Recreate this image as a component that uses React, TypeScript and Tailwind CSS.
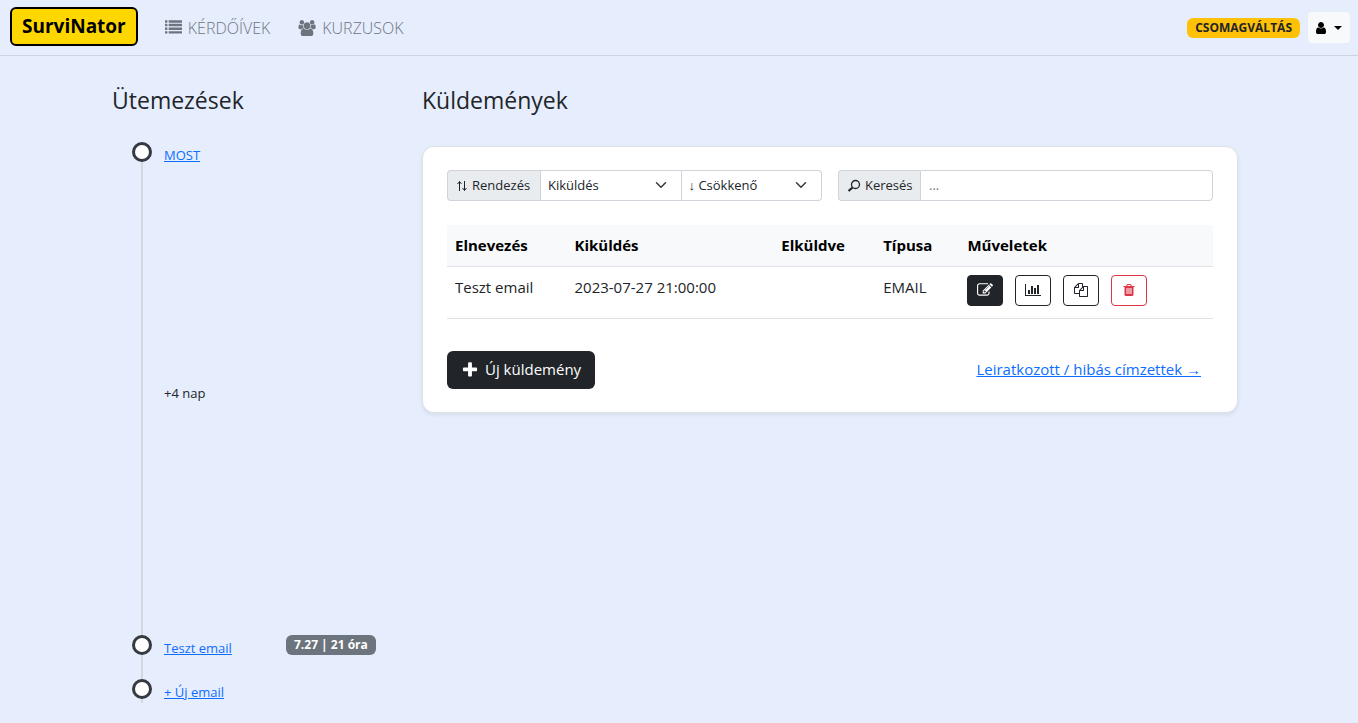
import type { ReactNode } from 'react';

type IconProps = { path: string; box?: string; className?: string };

const icons = {
  list: 'M256 1312v192q0 13-9.5 22.5t-22.5 9.5h-192q-13 0-22.5-9.5t-9.5-22.5v-192q0-13 9.5-22.5t22.5-9.5h192q13 0 22.5 9.5t9.5 22.5zm0-384v192q0 13-9.5 22.5t-22.5 9.5h-192q-13 0-22.5-9.5t-9.5-22.5v-192q0-13 9.5-22.5t22.5-9.5h192q13 0 22.5 9.5t9.5 22.5zm0-384v192q0 13-9.5 22.5t-22.5 9.5h-192q-13 0-22.5-9.5t-9.5-22.5v-192q0-13 9.5-22.5t22.5-9.5h192q13 0 22.5 9.5t9.5 22.5zm1536 768v192q0 13-9.5 22.5t-22.5 9.5h-1344q-13 0-22.5-9.5t-9.5-22.5v-192q0-13 9.5-22.5t22.5-9.5h1344q13 0 22.5 9.5t9.5 22.5zm-1536-1152v192q0 13-9.5 22.5t-22.5 9.5h-192q-13 0-22.5-9.5t-9.5-22.5v-192q0-13 9.5-22.5t22.5-9.5h192q13 0 22.5 9.5t9.5 22.5zm1536 768v192q0 13-9.5 22.5t-22.5 9.5h-1344q-13 0-22.5-9.5t-9.5-22.5v-192q0-13 9.5-22.5t22.5-9.5h1344q13 0 22.5 9.5t9.5 22.5zm0-384v192q0 13-9.5 22.5t-22.5 9.5h-1344q-13 0-22.5-9.5t-9.5-22.5v-192q0-13 9.5-22.5t22.5-9.5h1344q13 0 22.5 9.5t9.5 22.5zm0-384v192q0 13-9.5 22.5t-22.5 9.5h-1344q-13 0-22.5-9.5t-9.5-22.5v-192q0-13 9.5-22.5t22.5-9.5h1344q13 0 22.5 9.5t9.5 22.5z',
  users: 'M529 896q-162 5-265 128h-134q-82 0-138-40.5t-56-118.5q0-353 124-353 6 0 43.5 21t97.5 42.5 119 21.5q67 0 133-23-5 37-5 66 0 159 93 293zm1071 637q0 120-73 189.5t-194 69.5h-874q-121 0-194-69.5t-73-189.5q0-53 3.5-103.5t14-109 26.5-108.5 43-97.5 62-81 85.5-53.5 111.5-20q10 0 43 21.5t73 48 107 48 135 21.5 135-21.5 107-48 73-48 43-21.5q61 0 111.5 20t85.5 53.5 62 81 43 97.5 26.5 108.5 14 109 3.5 103.5zm-1024-1277q0 106-75 181t-181 75-181-75-75-181 75-181 181-75 181 75 75 181zm704 384q0 159-112.5 271.5t-271.5 112.5-271.5-112.5-112.5-271.5 112.5-271.5 271.5-112.5 271.5 112.5 112.5 271.5zm576 225q0 78-56 118.5t-138 40.5h-134q-103-123-265-128 93-134 93-293 0-29-5-66 66 23 133 23 59 0 119-21.5t97.5-42.5 43.5-21q124 0 124 353zm-128-609q0 106-75 181t-181 75-181-75-75-181 75-181 181-75 181 75 75 181z',
  user: 'M1536 1399q0 109-62.5 187t-150.5 78h-854q-88 0-150.5-78t-62.5-187q0-85 8.5-160.5t31.5-152 58.5-131 94-89 134.5-34.5q131 128 313 128t313-128q76 0 134.5 34.5t94 89 58.5 131 31.5 152 8.5 160.5zm-256-887q0 159-112.5 271.5t-271.5 112.5-271.5-112.5-112.5-271.5 112.5-271.5 271.5-112.5 271.5 112.5 112.5 271.5z',
  edit: 'M888 1184l116-116-152-152-116 116v56h96v96h56zm440-720q-16-16-33 1l-350 350q-17 17-1 33t33-1l350-350q17-17 1-33zm80 594v190q0 119-84.5 203.5t-203.5 84.5h-832q-119 0-203.5-84.5t-84.5-203.5v-832q0-119 84.5-203.5t203.5-84.5h832q63 0 117 25 15 7 18 23 3 17-9 29l-49 49q-14 14-32 8-23-6-45-6h-832q-66 0-113 47t-47 113v832q0 66 47 113t113 47h832q66 0 113-47t47-113v-126q0-13 9-22l64-64q15-15 35-7t20 29zm-96-738l288 288-672 672h-288v-288zm444 132l-92 92-288-288 92-92q28-28 68-28t68 28l152 152q28 28 28 68t-28 68z',
  chart: 'M640 896v512h-256v-512h256zm384-512v1024h-256v-1024h256zm1024 1152v128h-2048v-1536h128v1408h1920zm-640-896v768h-256v-768h256zm384-384v1152h-256v-1152h256z',
  copy: 'M1696 384q40 0 68 28t28 68v1216q0 40-28 68t-68 28h-960q-40 0-68-28t-28-68v-288h-544q-40 0-68-28t-28-68v-672q0-40 20-88t48-76l408-408q28-28 76-48t88-20h416q40 0 68 28t28 68v328q68-40 128-40h416zm-544 213l-299 299h299v-299zm-640-384l-299 299h299v-299zm196 647l316-316v-416h-384v416q0 40-28 68t-68 28h-416v640h512v-256q0-40 20-88t48-76zm956 804v-1152h-384v416q0 40-28 68t-68 28h-416v640h896z',
  trash: 'M704 1376v-704q0-14-9-23t-23-9h-64q-14 0-23 9t-9 23v704q0 14 9 23t23 9h64q14 0 23-9t9-23zm256 0v-704q0-14-9-23t-23-9h-64q-14 0-23 9t-9 23v704q0 14 9 23t23 9h64q14 0 23-9t9-23zm256 0v-704q0-14-9-23t-23-9h-64q-14 0-23 9t-9 23v704q0 14 9 23t23 9h64q14 0 23-9t9-23zm-544-992h448l-48-117q-7-9-17-11h-317q-10 2-17 11zm928 32v64q0 14-9 23t-23 9h-96v948q0 83-47 143.5t-113 60.5h-832q-66 0-113-58.5t-47-141.5v-952h-96q-14 0-23-9t-9-23v-64q0-14 9-23t23-9h309l70-167q15-37 54-63t79-26h320q40 0 79 26t54 63l70 167h309q14 0 23 9t9 23z',
  plus: 'M1600 736v192q0 40-28 68t-68 28h-416v416q0 40-28 68t-68 28h-192q-40 0-68-28t-28-68v-416h-416q-40 0-68-28t-28-68v-192q0-40 28-68t68-28h416v-416q0-40 28-68t68-28h192q40 0 68 28t28 68v416h416q40 0 68 28t28 68z',
};

function Icon({ path, box = '0 0 1792 1792', className = 'size-4' }: IconProps) {
  return (
    <svg viewBox={box} className={className} fill="currentColor" aria-hidden="true">
      <path d={path} />
    </svg>
  );
}

function NavLink({ icon, children }: { icon: ReactNode; children: ReactNode }) {
  return (
    <a href="#" className="flex items-center gap-1.5 font-light text-[#6c757d]">
      {icon}
      {children}
    </a>
  );
}

function Header() {
  return (
    <header className="flex h-14 items-center border-b border-[#cdd3e0] pr-2 pl-2.5">
      <a
        href="#"
        className="mb-0.5 flex h-[39px] items-center rounded-md border-2 border-black bg-[#ffd700] px-2.5 text-[19px] font-bold text-black"
      >
        SurviNator
      </a>
      <nav className="ml-[27px] flex grow items-center gap-7 text-[16px]">
        <NavLink icon={<Icon path={icons.list} className="size-[17px]" />}>KÉRDŐÍVEK</NavLink>
        <NavLink icon={<Icon path={icons.users} box="-64 0 1920 1792" className="h-4 w-[18px]" />}>
          KURZUSOK
        </NavLink>
      </nav>
      <div className="flex items-center gap-2">
        <a
          href="#"
          className="flex h-5 items-center rounded-md bg-[#ffc107] px-2 text-[12px] font-bold text-[#212529]"
        >
          CSOMAGVÁLTÁS
        </a>
        <button
          type="button"
          aria-label="Fiók"
          className="flex h-[31px] items-center gap-2 rounded bg-[#f8f9fa] px-2 text-black"
        >
          <Icon path={icons.user} box="256 0 1280 1792" className="h-3.5 w-2.5" />
          <svg viewBox="0 0 8 4" className="h-1 w-2" fill="currentColor" aria-hidden="true">
            <path d="M0 0h8L4 4z" />
          </svg>
        </button>
      </div>
    </header>
  );
}

function Step({
  marker = true,
  className,
  children,
}: {
  marker?: boolean;
  className: string;
  children: ReactNode;
}) {
  return (
    <li className={`flex gap-3 ${className}`}>
      <span className="flex w-5 flex-col items-center">
        {marker && <span className="size-5 rounded-full border-3 border-[#343a40] bg-white" />}
        <span className="w-0.5 grow bg-[#d3d7e0]" />
      </span>
      {children}
    </li>
  );
}

function Timeline() {
  return (
    <section>
      <h2 className="text-[23px] leading-7 font-medium">Ütemezések</h2>
      <ol className="mt-7 ml-5 text-[13px] leading-5">
        <Step className="h-[238px]">
          <a href="#" className="mt-[3px] self-start text-[#0d6efd] underline">
            MOST
          </a>
        </Step>
        <Step marker={false} className="h-[255px]">
          <span className="mt-[3px]">+4 nap</span>
        </Step>
        <Step className="h-11">
          <a href="#" className="mt-[3px] w-[110px] self-start text-[#0d6efd] underline">
            Teszt email
          </a>
          <span className="flex h-5 items-center rounded-md bg-[#6c757d] px-2 text-[12px] font-bold text-white">
            7.27 | 21 óra
          </span>
        </Step>
        <Step className="h-6">
          <a href="#" className="mt-[3px] self-start text-[#0d6efd] underline">
            + Új email
          </a>
        </Step>
      </ol>
    </section>
  );
}

function Select({ id, label, options, className }: { id: string; label: string; options: string[]; className: string }) {
  return (
    <div className={`relative flex-1 border border-[#ced4da] bg-white ${className}`}>
      <select id={id} aria-label={label} className="h-full w-full appearance-none bg-transparent pr-8 pl-[7px] outline-none">
        {options.map((option) => (
          <option key={option}>{option}</option>
        ))}
      </select>
      <svg
        viewBox="0 0 16 16"
        className="pointer-events-none absolute top-2 right-3.5 size-3"
        fill="none"
        stroke="#343a40"
        strokeWidth="2"
        strokeLinecap="round"
        strokeLinejoin="round"
        aria-hidden="true"
      >
        <path d="m2 5 6 6 6-6" />
      </svg>
    </div>
  );
}

function Filters() {
  return (
    <div className="flex gap-4 text-[13px]">
      <div className="flex h-[31px] w-[375px]">
        <label
          htmlFor="sort"
          className="flex w-[93px] items-center gap-1 rounded-l border border-r-0 border-[#ced4da] bg-[#e9ecef] pl-2"
        >
          <svg viewBox="0 0 12 12" className="size-3" fill="none" stroke="currentColor" aria-hidden="true">
            <path d="M3.5 11V1.5M1.5 4l2-2.5 2 2.5M8.500 1v9.500M6.500 8l2 2.500 2-2.500" />
          </svg>
          Rendezés
        </label>
        <Select id="sort" label="Rendezés" options={['Kiküldés', 'Elnevezés']} className="" />
        <Select id="order" label="Sorrend" options={['↓ Csökkenő', '↑ Növekvő']} className="rounded-r border-l-0" />
      </div>
      <div className="flex h-[31px] grow">
        <label
          htmlFor="search"
          className="flex w-[82px] items-center gap-1 rounded-l border border-r-0 border-[#ced4da] bg-[#e9ecef] pl-2"
        >
          <svg viewBox="0 0 14 14" className="size-3.5" fill="none" stroke="currentColor" aria-hidden="true">
            <circle cx="8.500" cy="5.500" r="4" strokeWidth="1.300" />
            <path d="M5.500 8.500 1.500 12" strokeWidth="2.200" />
          </svg>
          Keresés
        </label>
        <input
          id="search"
          type="text"
          placeholder="..."
          className="min-w-0 grow rounded-r border border-[#ced4da] bg-white px-2 outline-none placeholder:text-[#6c757d]"
        />
      </div>
    </div>
  );
}

function Action({ label, className, children }: { label: string; className: string; children: ReactNode }) {
  return (
    <button
      type="button"
      aria-label={label}
      className={`flex h-[31px] w-9 items-center justify-center rounded border ${className}`}
    >
      {children}
    </button>
  );
}

function Mailings() {
  return (
    <section>
      <h2 className="text-[23px] leading-7 font-medium">Küldemények</h2>
      <div className="mt-8 rounded-xl border border-[#dee2e6] bg-white px-6 py-[23px] shadow-[0_2px_4px_rgba(0,0,0,0.075)]">
        <Filters />
        <table className="mt-6 w-full table-fixed text-left text-[15px]">
          <colgroup>
            <col className="w-[15.6%]" />
            <col className="w-[27%]" />
            <col className="w-[13.3%]" />
            <col className="w-[11%]" />
            <col />
          </colgroup>
          <thead>
            <tr className="h-[41px] border-b border-[#dee2e6] bg-[#f8f9fa] text-black">
              <th className="px-2 font-bold">Elnevezés</th>
              <th className="px-2 font-bold">Kiküldés</th>
              <th className="px-2 font-bold">Elküldve</th>
              <th className="px-2 font-bold">Típusa</th>
              <th className="px-2 font-bold">Műveletek</th>
            </tr>
          </thead>
          <tbody>
            <tr className="h-[52px] border-b border-[#dee2e6] align-top leading-6">
              <td className="p-2">Teszt email</td>
              <td className="p-2">2023-07-27 21:00:00</td>
              <td className="p-2" />
              <td className="p-2">EMAIL</td>
              <td className="px-2 pt-2">
                <div className="flex gap-3">
                  <Action label="Szerkesztés" className="border-[#212529] bg-[#212529] text-white">
                    <Icon path={icons.edit} />
                  </Action>
                  <Action label="Statisztika" className="border-[#212529]">
                    <Icon path={icons.chart} box="0 0 2048 1792" className="h-3.5 w-4" />
                  </Action>
                  <Action label="Másolás" className="border-[#212529]">
                    <Icon path={icons.copy} className="size-3.5" />
                  </Action>
                  <Action label="Törlés" className="border-[#dc3545] text-[#dc3545]">
                    <Icon path={icons.trash} className="size-3.5" />
                  </Action>
                </div>
              </td>
            </tr>
          </tbody>
        </table>
        <div className="mt-8 flex items-center justify-between pr-3">
          <button
            type="button"
            className="flex h-[38px] items-center gap-1.5 rounded-md bg-[#212529] px-3.5 text-[15px] text-white"
          >
            <Icon path={icons.plus} className="size-[18px]" />
            Új küldemény
          </button>
          <a href="#" className="text-[15px] text-[#0d6efd] underline">
            Leiratkozott / hibás címzettek →
          </a>
        </div>
      </div>
    </section>
  );
}

export default function App() {
  return (
    <div className="min-h-screen bg-[#e6edfd] font-['Open_Sans','Noto_Sans',sans-serif] text-[#212529]">
      <Header />
      <main className="grid grid-cols-[310px_1fr] pt-[30px] pr-[120px] pb-5 pl-28">
        <Timeline />
        <Mailings />
      </main>
    </div>
  );
}
